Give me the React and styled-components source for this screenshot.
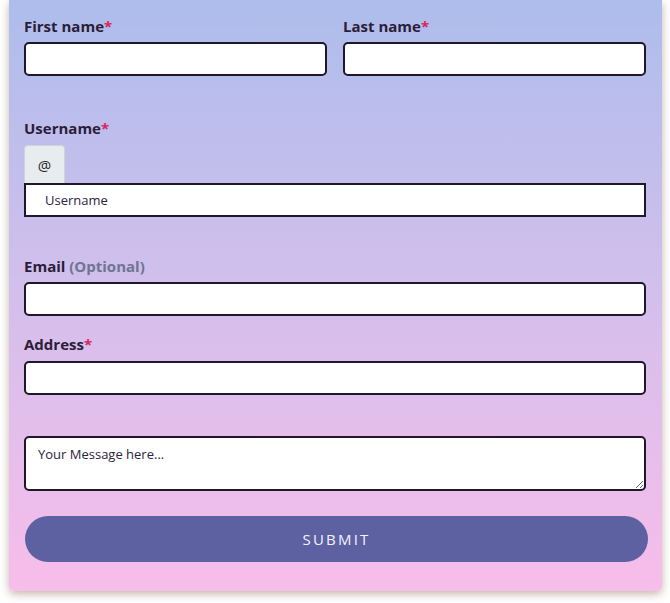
import styled, { createGlobalStyle } from 'styled-components';

const GlobalStyle = createGlobalStyle`
	html, body {
		margin: 0;
		padding: 0;
		background: #ffffff;
	}
	body {
		font-family: 'Open Sans', 'Noto Sans', sans-serif;
	}
`;

const Page = styled.div`
	padding: 0 8px 12px 9px;
	width: 653px;
`;

const Card = styled.form`
	box-sizing: border-box;
	width: 653px;
	padding: 16px 16px 29px 15px;
	background: linear-gradient(180deg, #adbdec 0%, #d3bfec 50%, #f8bdea 100%);
	border-radius: 0 0 5px 5px;
	box-shadow: 0 3px 9px rgba(110, 70, 40, 0.4);
`;

const Row = styled.div`
	display: grid;
	grid-template-columns: 1fr 1fr;
	gap: 16px;
`;

const Group = styled.div`
	display: flex;
	flex-direction: column;
	margin-bottom: ${(p) => p.$gap || 0}px;
`;

const Label = styled.label`
	font-size: 15px;
	font-weight: 700;
	line-height: 21px;
	color: #2b1d38;
	margin-bottom: ${(p) => p.$space || 5}px;
`;

const Req = styled.span`
	color: #d9235c;
`;

const Muted = styled.span`
	color: #6e7491;
`;

const Input = styled.input`
	box-sizing: border-box;
	width: 100%;
	height: 34px;
	border: 2px solid #21172b;
	border-radius: ${(p) => (p.$square ? 0 : 5)}px;
	background: #fff;
	padding: 0 19px;
	font-family: inherit;
	font-size: 13px;
	color: #222;
	outline: none;

	&::placeholder {
		color: #2b2340;
	}
`;

const AddonBox = styled.span`
	box-sizing: border-box;
	width: 41px;
	height: 38px;
	display: flex;
	align-items: center;
	justify-content: center;
	background: #e9ecef;
	border: 1px solid #ced4da;
	border-bottom: none;
	border-radius: 4px 4px 0 0;
	font-size: 15px;
	color: #212529;
`;

const Message = styled.textarea`
	box-sizing: border-box;
	display: block;
	width: 100%;
	height: 55px;
	border: 2px solid #21172b;
	border-radius: 5px;
	padding: 7px 12px;
	font-family: inherit;
	font-size: 13px;
	outline: none;
	resize: vertical;

	&::placeholder {
		color: #2b2340;
	}
`;

const SubmitBtn = styled.button`
	display: block;
	width: 623px;
	height: 46px;
	margin: 25px 0 0 1px;
	border: none;
	border-radius: 23px;
	background: #5d60a1;
	color: #f2f2ff;
	font-family: inherit;
	font-size: 15px;
	letter-spacing: 2.2px;
	cursor: pointer;
`;

function App() {
	return (
		<>
			<GlobalStyle />
			<Page>
				<Card onSubmit={(e) => e.preventDefault()}>
					<Row>
						<Group $gap={42}>
							<Label>
								First name<Req>*</Req>
							</Label>
							<Input type="text" />
						</Group>
						<Group $gap={42}>
							<Label>
								Last name<Req>*</Req>
							</Label>
							<Input type="text" />
						</Group>
					</Row>

					<Group $gap={39}>
						<Label $space={6}>
							Username<Req>*</Req>
						</Label>
						<AddonBox>@</AddonBox>
						<Input $square type="text" placeholder="Username" />
					</Group>

					<Group $gap={18}>
						<Label>
							Email <Muted>(Optional)</Muted>
						</Label>
						<Input type="email" />
					</Group>

					<Group $gap={41}>
						<Label $space={6}>
							Address<Req>*</Req>
						</Label>
						<Input type="text" />
					</Group>

					<Message placeholder="Your Message here..." />

					<SubmitBtn type="submit">SUBMIT</SubmitBtn>
				</Card>
			</Page>
		</>
	);
}

export default App;
